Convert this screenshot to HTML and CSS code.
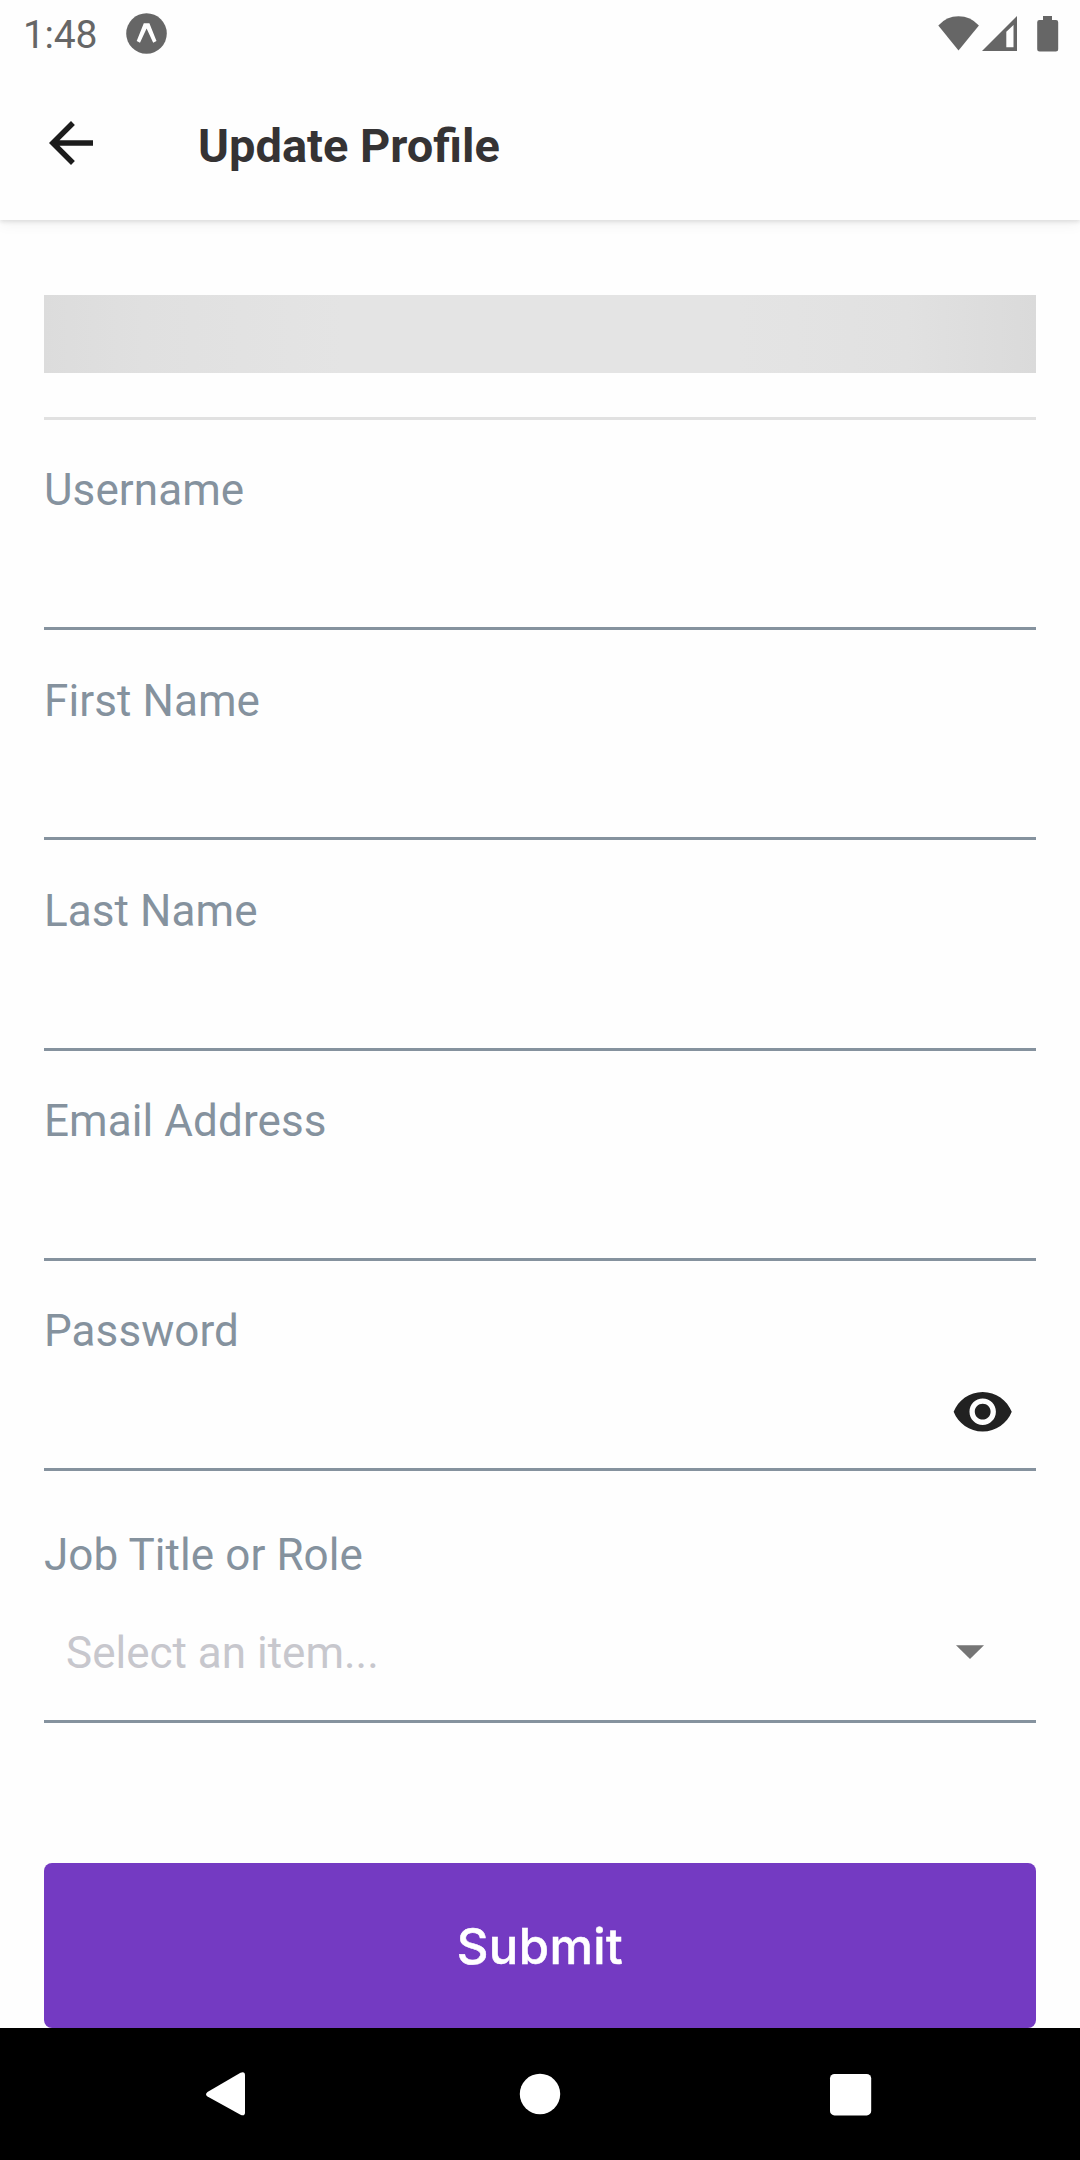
FILE: index.html
```html
<!DOCTYPE html>
<html lang="en">
<head>
<meta charset="utf-8">
<title>Update Profile</title>
<link rel="stylesheet" href="styles.css">
</head>
<body>
<header class="header">
  <div class="status">
    <span class="time">1:48</span>
    <svg class="badge" viewBox="0 0 41 41"><circle cx="20.5" cy="20.5" r="20.3" fill="#666"/><path d="M17.8 10.3h5.6l7.1 17.6-3.3 1.9-6.6-14.4-6.6 14.4-3.3-1.9z" fill="#fff"/></svg>
    <svg class="signals" viewBox="0 0 122 38"><g fill="#666"><path d="M0.3 11.500Q8.500 2.300 20.500 2.300T40.900 11.500L20.500 36.500Z"/><path fill-rule="evenodd" d="M44 37L79 2V37ZM68.300 17.800V33.300H75.500V11Z"/><path d="M105 2h9v4h4a2.200 2.200 0 0 1 2.200 2.200V35a2.500 2.500 0 0 1-2.500 2.500h-16A2.500 2.500 0 0 1 99.200 35V8.200A2.200 2.200 0 0 1 101.400 6h3.600z"/></g></svg>
  </div>
  <div class="appbar">
    <svg class="back" viewBox="0 0 24 24"><path fill="#1c1c1c" d="M20 11H7.830l5.590-5.590L12 4l-8 8 8 8 1.410-1.410L7.830 13H20v-2z"/></svg>
    <h1 class="title">Update Profile</h1>
  </div>
</header>
<main class="form">
  <div class="banner"></div>
  <label class="field"><span>Username</span></label>
  <label class="field"><span>First Name</span></label>
  <label class="field"><span>Last Name</span></label>
  <label class="field"><span>Email Address</span></label>
  <label class="field"><span>Password</span>
    <svg class="eye" viewBox="0 0 24 24"><path fill="#212121" d="M12 4.500C7 4.500 2.730 7.610 1 12c1.730 4.390 6 7.500 11 7.500s9.270-3.110 11-7.500c-1.730-4.390-6-7.500-11-7.500zM12 17c-2.760 0-5-2.240-5-5s2.240-5 5-5 5 2.240 5 5-2.240 5-5 5zm0-8c-1.660 0-3 1.340-3 3s1.340 3 3 3 3-1.340 3-3-1.340-3-3-3z"/></svg>
  </label>
  <div class="role">
    <span>Job Title or Role</span>
    <div class="select"><span>Select an item...</span><svg class="caret" viewBox="0 0 28 14"><path fill="#757575" d="M0 0.300h28L14 14z"/></svg></div>
  </div>
  <button class="submit">Submit</button>
</main>
<nav class="nav">
  <svg viewBox="0 0 1080 132"><g fill="#fff"><path d="M207.500 64L240.500 44.800Q245 43 245 47.500V84.500Q245 88.500 240.500 86.800L207.500 68.500Q204.500 66.300 207.500 64Z"/><circle cx="540" cy="66" r="20.200"/><rect x="830" y="46" width="41.200" height="41.400" rx="4.500"/></g></svg>
</nav>
</body>
</html>
```
FILE: styles.css
```css
* { box-sizing: border-box; }
body {
  margin: 0;
  width: 1080px;
  height: 2160px;
  overflow: hidden;
  display: flex;
  flex-direction: column;
  background: #fefefe;
  font-family: Roboto, "Liberation Sans", sans-serif;
}
svg { display: block; flex: none; }
.header {
  height: 220px;
  background: #fefefe;
  box-shadow: 0 2px 4px rgba(0, 0, 0, .1), 0 4px 14px rgba(0, 0, 0, .05);
}
.status { height: 66px; padding: 0 20px 0 23px; display: flex; align-items: center; color: #666; }
.time { width: 103px; font-size: 39px; line-height: 48px; letter-spacing: -.3px; padding-top: 4px; }
.badge { width: 41px; height: 41px; }
.signals { width: 122px; height: 38px; margin-left: auto; }
.appbar { height: 154px; padding-left: 38px; display: flex; align-items: center; }
.back { width: 66px; height: 66px; }
.title { margin: 6px 0 0 94px; font-size: 47px; line-height: 60px; font-weight: 700; color: #353334; }
.form { flex: 1; padding: 75px 44px 0; display: flex; flex-direction: column; }
.banner {
  height: 125px;
  padding-bottom: 44px;
  border-bottom: 3px solid #e1e1e1;
  background: linear-gradient(90deg, #dcdcdc, #e0e0e0 10%, #e4e4e4 30%, #e4e4e4 70%, #e1e1e1 87%, #dadada) content-box;
}
.field, .role { color: #85929e; font-size: 44px; line-height: 52px; letter-spacing: .08px; border-bottom: 3px solid #85929e; }
.field { display: flex; justify-content: space-between; height: 210.200px; padding-top: 44.400px; }
.eye { width: 63.400px; height: 63.400px; margin: 74.500px 22px 0 0; }
.role { height: 252px; padding-top: 58px; }
.select { display: flex; justify-content: space-between; padding: 46px 52px 0 22px; color: #c7c7cd; letter-spacing: 0; }
.caret { width: 28px; height: 14px; margin-top: 18px; }
.submit {
  height: 165px;
  margin-top: 140px;
  border: 0;
  border-radius: 8px;
  padding: 3px 0 0;
  background: #743ac2;
  color: #fff;
  font: 500 49px/60px Inter, "Liberation Sans", sans-serif;
  letter-spacing: .4px;
  -webkit-text-stroke: .5px #fff;
}
.nav { height: 132px; background: #000; }
.nav svg { width: 1080px; height: 132px; }
```
